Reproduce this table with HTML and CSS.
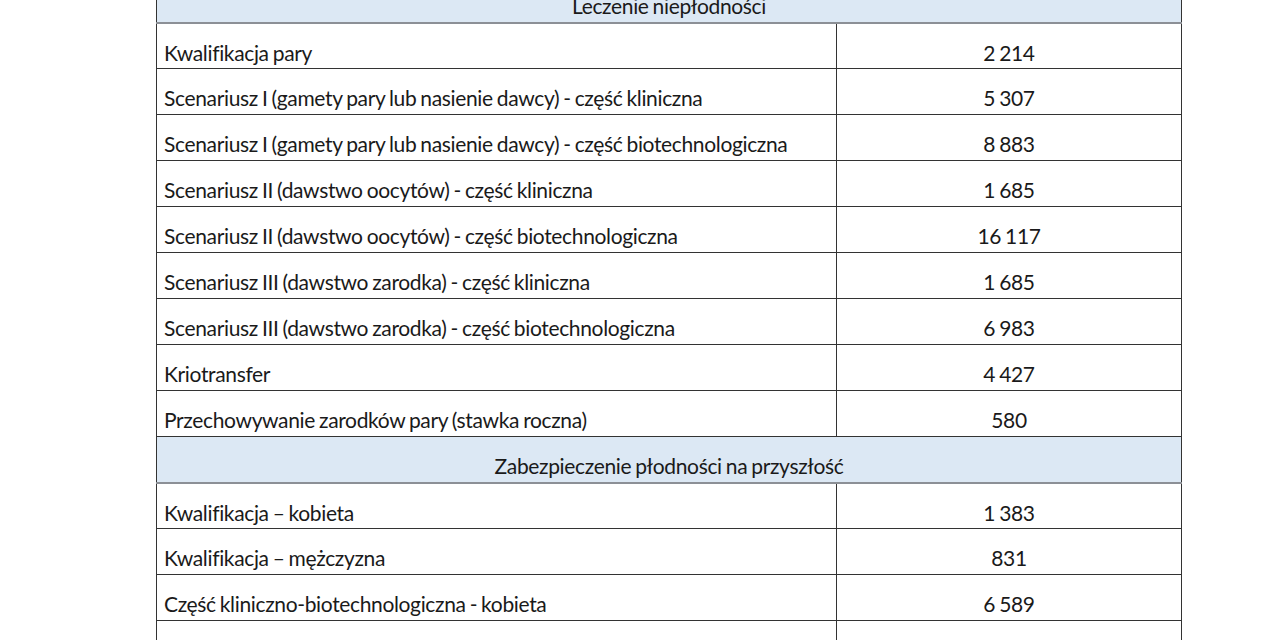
FILE: index.html
```html
<!DOCTYPE html>
<html lang="pl">
<head>
<meta charset="utf-8">
<link rel="stylesheet" href="styles.css">
</head>
<body>
<div class="wrap">
<table class="prices">
  <colgroup><col class="c-name"><col class="c-val"></colgroup>
  <tr class="section"><td colspan="2">Leczenie niepłodności</td></tr>
  <tr><td class="name">Kwalifikacja pary</td><td class="val">2 214</td></tr>
  <tr><td class="name">Scenariusz I (gamety pary lub nasienie dawcy) - część kliniczna</td><td class="val">5 307</td></tr>
  <tr><td class="name">Scenariusz I (gamety pary lub nasienie dawcy) - część biotechnologiczna</td><td class="val">8 883</td></tr>
  <tr><td class="name">Scenariusz II (dawstwo oocytów) - część kliniczna</td><td class="val">1 685</td></tr>
  <tr><td class="name">Scenariusz II (dawstwo oocytów) - część biotechnologiczna</td><td class="val">16 117</td></tr>
  <tr><td class="name">Scenariusz III (dawstwo zarodka) - część kliniczna</td><td class="val">1 685</td></tr>
  <tr><td class="name">Scenariusz III (dawstwo zarodka) - część biotechnologiczna</td><td class="val">6 983</td></tr>
  <tr><td class="name">Kriotransfer</td><td class="val">4 427</td></tr>
  <tr><td class="name">Przechowywanie zarodków pary (stawka roczna)</td><td class="val">580</td></tr>
  <tr class="section"><td colspan="2">Zabezpieczenie płodności na przyszłość</td></tr>
  <tr><td class="name">Kwalifikacja – kobieta</td><td class="val">1 383</td></tr>
  <tr><td class="name">Kwalifikacja – mężczyzna</td><td class="val">831</td></tr>
  <tr><td class="name">Część kliniczno-biotechnologiczna - kobieta</td><td class="val">6 589</td></tr>
  <tr><td class="name">Część kliniczno-biotechnologiczna - mężczyzna</td><td class="val">1 045</td></tr>
</table>
</div>
</body>
</html>
```
FILE: styles.css
```css
html, body {
  margin: 0;
  padding: 0;
  background: #fff;
}
body {
  font-family: Lato, "Noto Sans", sans-serif;
  color: #1a1a1a;
}
.wrap {
  margin-top: -24px;
  padding-left: 156px;
}
.prices {
  border-collapse: collapse;
  width: 1025px;
  table-layout: fixed;
}
.c-name {
  width: 680px;
}
.c-val {
  width: 345px;
}
.prices td {
  border: 1px solid #333;
  height: 46px;
  padding: 17px 7px 0 7px;
  box-sizing: border-box;
  font-size: 21px;
  letter-spacing: -0.35px;
  word-spacing: -1px;
  line-height: 24px;
  white-space: nowrap;
  vertical-align: top;
}
.prices .val {
  text-align: center;
}
.section td {
  background: #dce8f4;
  text-align: center;
  border-bottom: 2px solid #8c9096;
}
```
